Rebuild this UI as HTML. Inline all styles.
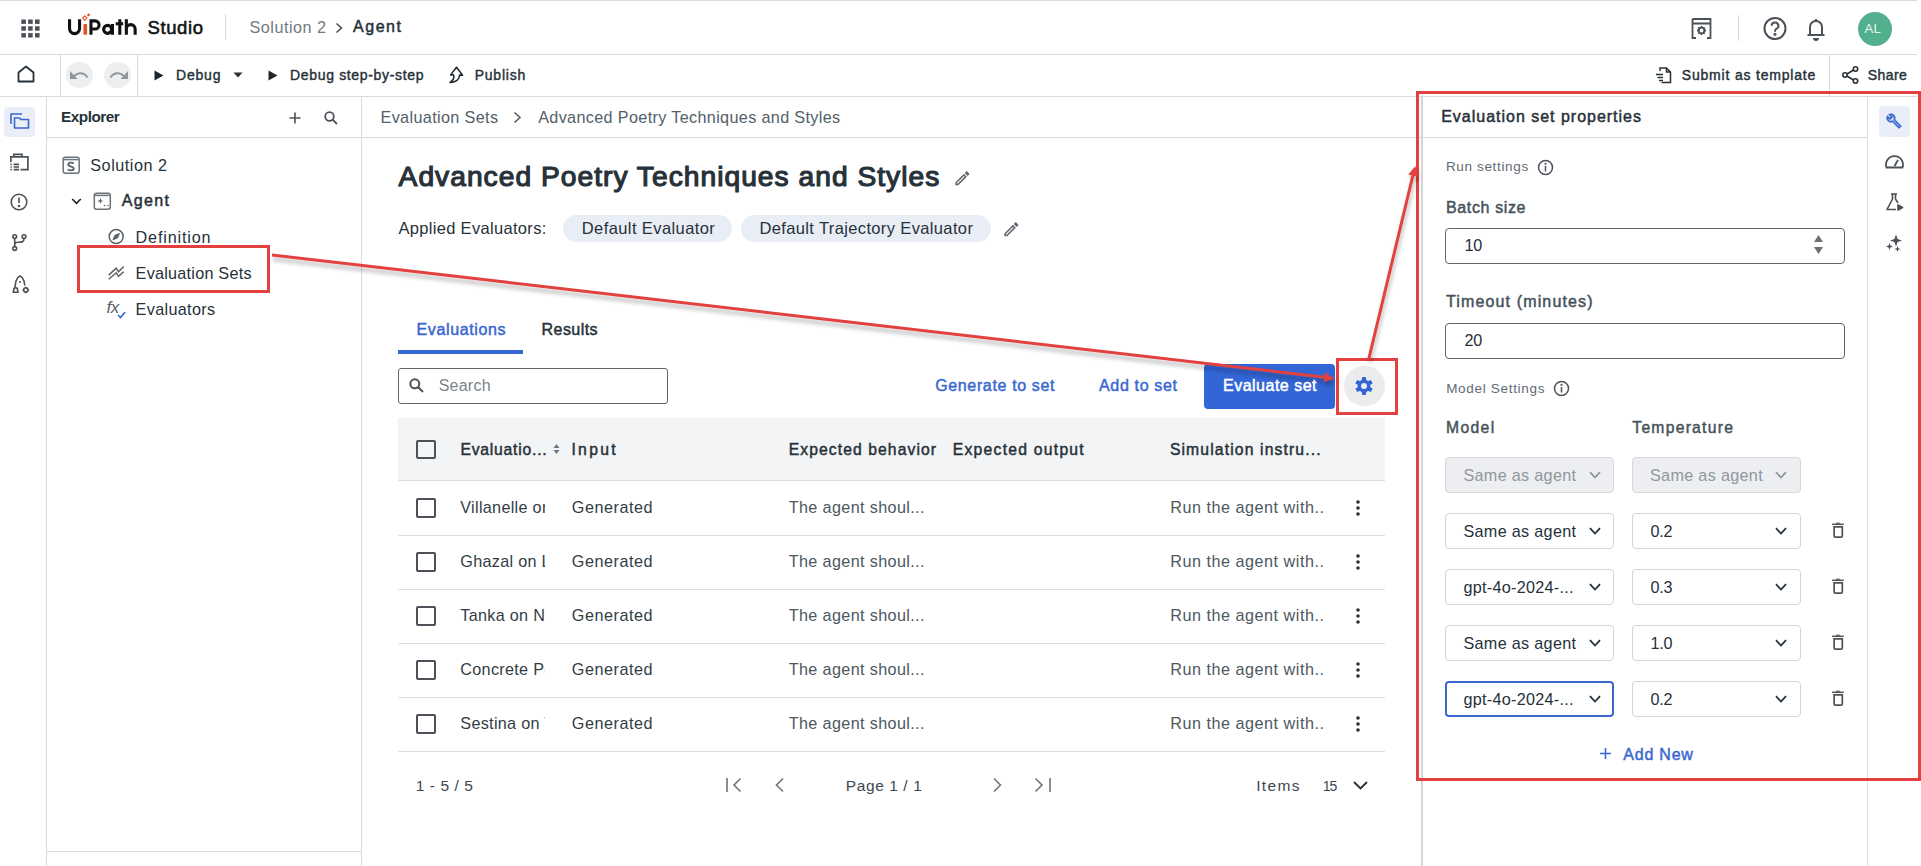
<!DOCTYPE html>
<html><head><meta charset="utf-8"><style>
html,body{margin:0;padding:0;background:#fff;}
body{width:1921px;height:866px;position:relative;overflow:hidden;font-family:"Liberation Sans",sans-serif;}
.t{position:absolute;white-space:nowrap;line-height:1;}
.a{position:absolute;}
svg{position:absolute;overflow:visible;}
</style></head><body>
<!-- structural lines -->
<div class="a" style="left:0;top:0;width:1917px;height:1px;background:#d9dcdf"></div>
<div class="a" style="left:0;top:54px;width:1917px;height:1px;background:#dadada"></div>
<div class="a" style="left:0;top:96px;width:1917px;height:1px;background:#dadada"></div>
<div class="a" style="left:60px;top:55px;width:1px;height:41px;background:#dadada"></div>
<div class="a" style="left:137px;top:55px;width:1px;height:41px;background:#dadada"></div>
<div class="a" style="left:1829px;top:55px;width:1px;height:41px;background:#dadada"></div>
<div class="a" style="left:225px;top:14px;width:1px;height:26px;background:#dadada"></div>
<div class="a" style="left:1738px;top:15px;width:1px;height:26px;background:#dadada"></div>
<div class="a" style="left:46px;top:97px;width:1px;height:769px;background:#dadada"></div>
<div class="a" style="left:361px;top:97px;width:1px;height:769px;background:#dadada"></div>
<div class="a" style="left:47px;top:137px;width:314px;height:1px;background:#dadada"></div>
<div class="a" style="left:362px;top:137px;width:1059px;height:1px;background:#dadada"></div>
<div class="a" style="left:47px;top:851px;width:314px;height:1px;background:#dadada"></div>
<div class="a" style="left:1421px;top:97px;width:2px;height:769px;background:#d6d6d6"></div>
<div class="a" style="left:1423px;top:137px;width:444px;height:1px;background:#dadada"></div>
<div class="a" style="left:1867px;top:97px;width:1px;height:769px;background:#e0e0e0"></div>

<!-- header -->
<svg style="left:21px;top:19px" width="19" height="19" viewBox="0 0 19 19" fill="#4b5157">
<rect x="0.3" y="0.5" width="4.6" height="4.4"/><rect x="7.1" y="0.5" width="4.6" height="4.4"/><rect x="14" y="0.5" width="4.6" height="4.4"/>
<rect x="0.3" y="7.3" width="4.6" height="4.4"/><rect x="7.1" y="7.3" width="4.6" height="4.4"/><rect x="14" y="7.3" width="4.6" height="4.4"/>
<rect x="0.3" y="14.1" width="4.6" height="4.4"/><rect x="7.1" y="14.1" width="4.6" height="4.4"/><rect x="14" y="14.1" width="4.6" height="4.4"/>
</svg>
<svg style="left:0;top:0" width="150" height="45" viewBox="0 0 150 45" fill="none" stroke="#111" stroke-width="3.1">
<path d="M69.55 19.3 V28.6 A5 5 0 0 0 79.55 28.6 V19.3"/>
<path d="M90.95 34.8 V20.85 H95 A4.1 4.1 0 0 1 95 29.05 H90.95"/>
<circle cx="107.6" cy="29.35" r="4"/><path d="M112.45 24 V34.8"/>
<path d="M119.8 19.3 V34.8 M115.7 23.7 H123.2"/>
<path d="M126.35 19.3 V34.8 M126.35 29 A4.4 4.4 0 0 1 135.15 29 V34.8"/>
<rect x="83.4" y="24" width="3.7" height="10.8" rx="1" fill="#e2542c" stroke="none"/>
<path d="M84.8 15.8 L87 18.1 L84.8 20.4 L82.6 18.1 Z" stroke="#e2542c" stroke-width="1.1"/>
<path d="M88.6 13.2 L90.3 14.9 L88.6 16.6 L86.9 14.9 Z" fill="#e2542c" stroke="none"/>
</svg>
<svg style="left:335px;top:22px" width="9" height="12" viewBox="0 0 9 12"><path d="M1.5 1.5 L6.5 6 L1.5 10.5" stroke="#4b5157" stroke-width="1.6" fill="none"/></svg>
<!-- right header icons -->
<svg style="left:1691px;top:18px" width="21" height="21" viewBox="0 0 21 21" fill="none" stroke="#4b5157" stroke-width="1.8">
<path d="M1 5.5 H20 M1.5 1 H19.5 V20 H16 M5 20 H1.5 V1"/><circle cx="10.5" cy="12.5" r="2.8"/><path d="M10.5 8 v1.5 M10.5 15.5 v1.5 M6 12.5 h1.5 M13.5 12.5 h1.5 M7.3 9.3 l1 1 M12.7 14.7 l1 1 M13.7 9.3 l-1 1 M8.3 14.7 l-1 1"/>
</svg>
<svg style="left:1763px;top:17px" width="24" height="24" viewBox="0 0 24 24" fill="none" stroke="#4b5157" stroke-width="2">
<circle cx="12" cy="11.5" r="10.5"/><path d="M8.6 8.8 a3.4 3.4 0 1 1 4.8 3.1 c-1 .5 -1.4 1.1 -1.4 2.2 v.6"/><circle cx="12" cy="17.3" r="0.6" fill="#4b5157"/>
</svg>
<svg style="left:1806px;top:17px" width="20" height="24" viewBox="0 0 20 24" fill="none" stroke="#4b5157" stroke-width="2">
<path d="M10 2 v1.5 M4 17 V10 a6 6 0 0 1 12 0 V17 M1.5 18 H18.5"/><path d="M8 21 a2 2 0 0 0 4 0" fill="#4b5157"/>
</svg>
<div class="a" style="left:1858px;top:11.5px;width:34px;height:34px;border-radius:50%;background:#52b08e"></div>
<div class="t" style="left:1864.5px;top:22px;font-size:13px;color:#eaf7f1;letter-spacing:0.3px">AL</div>

<!-- toolbar -->
<svg style="left:17px;top:65px" width="18" height="18" viewBox="0 0 18 18" fill="none" stroke="#273139" stroke-width="1.8" stroke-linejoin="round">
<path d="M1.5 7.5 L9 1.5 L16.5 7.5 V16.5 H1.5 Z"/>
</svg>
<div class="a" style="left:66.3px;top:61.9px;width:26.6px;height:26.6px;border-radius:50%;background:#eceef0"></div>
<div class="a" style="left:104.1px;top:61.9px;width:26.6px;height:26.6px;border-radius:50%;background:#eceef0"></div>
<svg style="left:69px;top:69px" width="22" height="14" viewBox="0 0 22 14"><path d="M4 9 C7 3 15 2.5 18.5 8.5" stroke="#8f979d" stroke-width="2" fill="none"/><path d="M1 2 L1 10 L8.5 10 Z" fill="#8f979d"/></svg>
<svg style="left:107px;top:69px" width="22" height="14" viewBox="0 0 22 14"><path d="M18 9 C15 3 7 2.5 3.5 8.5" stroke="#8f979d" stroke-width="2" fill="none"/><path d="M21 2 L21 10 L13.5 10 Z" fill="#8f979d"/></svg>
<svg style="left:154px;top:70px" width="10" height="11" viewBox="0 0 10 11"><path d="M0.5 0.5 L9.5 5.5 L0.5 10.5Z" fill="#1e262c"/></svg>
<svg style="left:233px;top:72px" width="10" height="6" viewBox="0 0 10 6"><path d="M0.5 0.5 H9.5 L5 5.5Z" fill="#273139"/></svg>
<svg style="left:268px;top:70px" width="10" height="11" viewBox="0 0 10 11"><path d="M0.5 0.5 L9.5 5.5 L0.5 10.5Z" fill="#1e262c"/></svg>
<svg style="left:449px;top:66px" width="15" height="18" viewBox="0 0 15 18" fill="none" stroke="#1e262c" stroke-width="1.5" stroke-linejoin="round"><path d="M7.5 1.2 L13.6 9.2 L10.6 9 C10.5 13 7 16 1 16.6 C4.5 14 5.5 11 4.5 8.8 L1.6 8.9 Z"/></svg>
<svg style="left:1655px;top:67px" width="17" height="17" viewBox="0 0 17 17" fill="none" stroke="#273139" stroke-width="1.5">
<path d="M5 4 V1 H11.5 L15.5 5 V15.5 H6.5 M11.5 1 V5 H15.5"/><path d="M1 7.5 H8 M2.5 10.5 H8 M4 13.5 H8"/>
</svg>
<svg style="left:1842px;top:66px" width="17" height="18" viewBox="0 0 17 18" fill="none" stroke="#273139" stroke-width="1.6">
<circle cx="13.5" cy="3" r="2.2"/><circle cx="3" cy="9" r="2.2"/><circle cx="13.5" cy="15" r="2.2"/><path d="M5 8 L11.5 4 M5 10 L11.5 14"/>
</svg>

<!-- left rail -->
<div class="a" style="left:3.5px;top:106.5px;width:31px;height:30px;border-radius:4px;background:#e9eef8"></div>
<svg style="left:10px;top:113px" width="20" height="16" viewBox="0 0 20 16" fill="none" stroke="#3a68cf" stroke-width="1.6" stroke-linejoin="round">
<path d="M1 11 V1 H12"/><path d="M4.5 5 H9.5 L11 6.5 H18.5 V15 H4.5 Z"/>
</svg>
<svg style="left:10px;top:153px" width="19" height="19" viewBox="0 0 19 19" fill="none" stroke="#4b5157" stroke-width="1.7">
<path d="M3.8 3.8 V1.4 H12 V3.8"/><path d="M0.9 9 V3.8 H17.9 V16.6 H10.5"/>
<path d="M0.5 11.4 H1.8 M3.6 11.4 H9 M0.5 14 H1.8 M3.6 14 H9 M0.5 16.6 H1.8 M3.6 16.6 H9"/>
</svg>
<svg style="left:10px;top:193px" width="18" height="18" viewBox="0 0 18 18" fill="none" stroke="#4b5157" stroke-width="1.6">
<circle cx="9" cy="9" r="7.8"/><path d="M9 4.5 V10"/><circle cx="9" cy="13" r="0.5" fill="#4b5157"/>
</svg>
<svg style="left:11px;top:234px" width="17" height="18" viewBox="0 0 17 18" fill="none" stroke="#4b5157" stroke-width="1.6">
<circle cx="3.7" cy="2.6" r="1.9"/><circle cx="13" cy="2.6" r="1.9"/><circle cx="3.7" cy="14.5" r="1.9"/><path d="M3.7 4.5 V12.6 M13 4.5 C13 8 11 8.3 7.5 8.3 C5 8.3 3.7 9 3.7 10.5"/>
</svg>
<svg style="left:12px;top:275px" width="18" height="19" viewBox="0 0 18 19" fill="none" stroke="#4b5157" stroke-width="1.6" stroke-linejoin="round">
<path d="M2.8 13 L3.5 8.5 C4 5 6 2 8 0.9 C10 2 12 5 12.5 8.5 L12.8 10.5"/><circle cx="8" cy="7" r="1" fill="#4b5157" stroke="none"/>
<path d="M1.2 17.2 L2.2 13 H5.2 L6 17.2 Z"/>
<circle cx="13.8" cy="15" r="2.1"/><path d="M13.8 11.7 V12.6 M13.8 17.4 V18.3 M10.5 15 H11.4 M16.2 15 H17.1"/>
</svg>

<!-- explorer -->
<svg style="left:289px;top:112px" width="12" height="12" viewBox="0 0 12 12"><path d="M6 0.5 V11.5 M0.5 6 H11.5" stroke="#4b5157" stroke-width="1.6"/></svg>
<svg style="left:324px;top:111px" width="14" height="14" viewBox="0 0 14 14" fill="none" stroke="#4b5157" stroke-width="1.8"><circle cx="5.5" cy="5.5" r="4.3"/><path d="M8.6 8.6 L13 13"/></svg>
<svg style="left:62px;top:156px" width="19" height="19" viewBox="0 0 19 19" fill="none" stroke="#6b7278" stroke-width="1.5">
<rect x="1.2" y="1.2" width="16" height="16" rx="2.2"/><path d="M2 3.6 H16.4"/>
<path d="M11.6 7.6 C10.8 6.2 6.3 6.1 6.3 8.6 C6.3 11 11.8 10.1 11.8 12.6 C11.8 15 7 14.8 6 13.3" stroke-width="1.9" stroke="#5b6369"/>
</svg>
<svg style="left:71px;top:198px" width="11" height="7" viewBox="0 0 11 7"><path d="M1.2 1 L5.5 5.3 L9.8 1" stroke="#1e262c" stroke-width="1.7" fill="none"/></svg>
<svg style="left:93px;top:192px" width="19" height="19" viewBox="0 0 19 19" fill="none" stroke="#6b7278" stroke-width="1.5">
<rect x="1.3" y="1.2" width="16" height="16" rx="2.2"/><path d="M2 3.4 H16.6"/>
<path d="M7.4 6 L8.2 8.2 L10.4 9 L8.2 9.8 L7.4 12 L6.6 9.8 L4.4 9 L6.6 8.2 Z" fill="#5b6369" stroke="none"/>
<circle cx="11.5" cy="13.5" r="0.8" fill="#5b6369" stroke="none"/><circle cx="15" cy="13.5" r="0.8" fill="#5b6369" stroke="none"/>
</svg>
<svg style="left:108px;top:229px" width="17" height="17" viewBox="0 0 17 17" fill="none" stroke="#5b6369" stroke-width="1.5">
<circle cx="8.2" cy="7.6" r="7"/><path d="M11.5 4.3 L9.6 9 L4.9 10.9 L6.8 6.2 Z" fill="#5b6369" stroke-width="0.8"/>
</svg>
<svg style="left:108px;top:265px" width="17" height="16" viewBox="0 0 17 16" fill="none" stroke="#5b6369" stroke-width="1.5" stroke-linejoin="miter">
<path d="M0.7 10.1 L8.2 3.2 L10.5 6.7 L15.7 1.5 M0.7 14.2 L8.2 7.8 L10.5 11.3 L15.7 6.7"/>
</svg>
<div class="t" style="left:106.5px;top:299px;font-size:17px;font-style:italic;color:#5b6369;letter-spacing:-0.5px">fx</div>
<svg style="left:117px;top:311px" width="9" height="8" viewBox="0 0 9 8"><path d="M1 4 L3.5 6.5 L8 1.2" stroke="#3a68cf" stroke-width="1.7" fill="none"/></svg>

<!-- main breadcrumb chevron -->
<svg style="left:513px;top:111px" width="9" height="13" viewBox="0 0 9 13"><path d="M1.5 1.5 L7 6.5 L1.5 11.5" stroke="#526069" stroke-width="1.6" fill="none"/></svg>
<!-- pencils -->
<svg style="left:953.3px;top:168.5px" width="18.7" height="18.7" viewBox="0 0 24 24"><path fill="#5f666c" d="M14.06 9.02l.92.92L5.92 19H5v-.92l9.06-9.06M17.66 3c-.25 0-.51.1-.7.29l-1.83 1.83 3.75 3.75 1.83-1.83c.39-.39.39-1.02 0-1.41l-2.34-2.34c-.2-.2-.45-.29-.71-.29zm-3.6 3.19L3 17.25V21h3.75L17.81 9.94l-3.75-3.75z"/></svg>
<svg style="left:1001.7px;top:219.9px" width="18.7" height="18.7" viewBox="0 0 24 24"><path fill="#5f666c" d="M14.06 9.02l.92.92L5.92 19H5v-.92l9.06-9.06M17.66 3c-.25 0-.51.1-.7.29l-1.83 1.83 3.75 3.75 1.83-1.83c.39-.39.39-1.02 0-1.41l-2.34-2.34c-.2-.2-.45-.29-.71-.29zm-3.6 3.19L3 17.25V21h3.75L17.81 9.94l-3.75-3.75z"/></svg>
<!-- chips -->
<div class="a" style="left:563px;top:215px;width:169px;height:27px;border-radius:14px;background:#e8edf6"></div>
<div class="a" style="left:741px;top:215px;width:250px;height:27px;border-radius:14px;background:#e8edf6"></div>
<!-- tabs -->
<div class="a" style="left:398px;top:350px;width:125px;height:4px;background:#3566d4"></div>
<!-- search -->
<div class="a" style="left:398px;top:368px;width:268px;height:33.5px;border:1px solid #646464;border-radius:3px"></div>
<svg style="left:409px;top:378px" width="15" height="15" viewBox="0 0 15 15" fill="none" stroke="#4b5157" stroke-width="2"><circle cx="5.8" cy="5.8" r="4.5"/><path d="M9 9 L14 14"/></svg>
<!-- button -->
<div class="a" style="left:1204px;top:364px;width:131px;height:44.5px;border-radius:4px;background:#3266d6"></div>
<div class="a" style="left:1344px;top:365.7px;width:40.6px;height:40.6px;border-radius:50%;background:#ebecee"></div>
<svg style="left:1353.3px;top:374.9px" width="22" height="22" viewBox="0 0 22 22">
<g fill="#3266d6"><circle cx="11" cy="11" r="6.4"/>
<rect x="8.9" y="2.1" width="4.2" height="4.5" rx="0.8"/><rect x="8.9" y="2.1" width="4.2" height="4.5" rx="0.8" transform="rotate(60 11 11)"/><rect x="8.9" y="2.1" width="4.2" height="4.5" rx="0.8" transform="rotate(120 11 11)"/>
<rect x="8.9" y="2.1" width="4.2" height="4.5" rx="0.8" transform="rotate(180 11 11)"/><rect x="8.9" y="2.1" width="4.2" height="4.5" rx="0.8" transform="rotate(240 11 11)"/><rect x="8.9" y="2.1" width="4.2" height="4.5" rx="0.8" transform="rotate(300 11 11)"/></g>
<circle cx="11" cy="11" r="3" fill="#ebecee"/>
</svg>

<!-- table -->
<div class="a" style="left:398px;top:418px;width:987px;height:62px;background:#f3f4f6"></div>
<div class="a" style="left:398px;top:480px;width:987px;height:1px;background:#dedede"></div>
<div class="a" style="left:398px;top:535px;width:987px;height:1px;background:#dedede"></div>
<div class="a" style="left:398px;top:589px;width:987px;height:1px;background:#dedede"></div>
<div class="a" style="left:398px;top:643px;width:987px;height:1px;background:#dedede"></div>
<div class="a" style="left:398px;top:697px;width:987px;height:1px;background:#dedede"></div>
<div class="a" style="left:398px;top:751px;width:987px;height:1px;background:#dedede"></div>
<div class="a" style="left:416px;top:439.5px;width:16px;height:15px;border:2px solid #4b5157;border-radius:2px"></div>
<div class="a" style="left:416px;top:498px;width:16px;height:16px;border:2px solid #4b5157;border-radius:2px"></div>
<div class="a" style="left:416px;top:552px;width:16px;height:16px;border:2px solid #4b5157;border-radius:2px"></div>
<div class="a" style="left:416px;top:606px;width:16px;height:16px;border:2px solid #4b5157;border-radius:2px"></div>
<div class="a" style="left:416px;top:660px;width:16px;height:16px;border:2px solid #4b5157;border-radius:2px"></div>
<div class="a" style="left:416px;top:714px;width:16px;height:16px;border:2px solid #4b5157;border-radius:2px"></div>
<svg style="left:553px;top:443px" width="7" height="12" viewBox="0 0 7 12"><path d="M0.5 5 L3.5 1 L6.5 5Z M0.5 7 L3.5 11 L6.5 7Z" fill="#6b757c"/></svg>
<svg style="left:1355px;top:500px" width="6" height="16" viewBox="0 0 6 16" fill="#273139"><circle cx="3" cy="2" r="1.8"/><circle cx="3" cy="8" r="1.8"/><circle cx="3" cy="14" r="1.8"/></svg>
<svg style="left:1355px;top:554px" width="6" height="16" viewBox="0 0 6 16" fill="#273139"><circle cx="3" cy="2" r="1.8"/><circle cx="3" cy="8" r="1.8"/><circle cx="3" cy="14" r="1.8"/></svg>
<svg style="left:1355px;top:608px" width="6" height="16" viewBox="0 0 6 16" fill="#273139"><circle cx="3" cy="2" r="1.8"/><circle cx="3" cy="8" r="1.8"/><circle cx="3" cy="14" r="1.8"/></svg>
<svg style="left:1355px;top:662px" width="6" height="16" viewBox="0 0 6 16" fill="#273139"><circle cx="3" cy="2" r="1.8"/><circle cx="3" cy="8" r="1.8"/><circle cx="3" cy="14" r="1.8"/></svg>
<svg style="left:1355px;top:716px" width="6" height="16" viewBox="0 0 6 16" fill="#273139"><circle cx="3" cy="2" r="1.8"/><circle cx="3" cy="8" r="1.8"/><circle cx="3" cy="14" r="1.8"/></svg>
<!-- pagination -->
<svg style="left:726px;top:777px" width="17" height="16" viewBox="0 0 17 16" fill="none" stroke="#6b757c" stroke-width="1.6"><path d="M1 1 V15 M14.5 1.5 L8 8 L14.5 14.5"/></svg>
<svg style="left:774px;top:777px" width="11" height="16" viewBox="0 0 11 16" fill="none" stroke="#6b757c" stroke-width="1.6"><path d="M9 1.5 L2.5 8 L9 14.5"/></svg>
<svg style="left:992px;top:777px" width="11" height="16" viewBox="0 0 11 16" fill="none" stroke="#6b757c" stroke-width="1.6"><path d="M2 1.5 L8.5 8 L2 14.5"/></svg>
<svg style="left:1033px;top:777px" width="18" height="16" viewBox="0 0 18 16" fill="none" stroke="#6b757c" stroke-width="1.6"><path d="M17 1 V15 M2.5 1.5 L9 8 L2.5 14.5"/></svg>
<svg style="left:1353px;top:781px" width="15" height="9" viewBox="0 0 15 9" fill="none" stroke="#273139" stroke-width="1.9"><path d="M1 1 L7.5 7.5 L14 1"/></svg>

<!-- right panel -->
<div class="a" style="left:1879px;top:106px;width:31px;height:31px;border-radius:4px;background:#e9eef8"></div>
<svg style="left:1886px;top:113px" width="16" height="16" viewBox="0 0 24 24"><path fill="#3a68cf" d="M22.61 18.99l-9.08-9.08c.93-2.34.45-5.1-1.44-7-2.3-2.3-5.9-2.51-8.45-.64l3.84 3.85-1.42 1.41-3.83-3.84C.36 6.24.57 9.85 2.87 12.14c1.86 1.86 4.57 2.35 6.89 1.48l9.11 9.11c.39.39 1.02.39 1.41 0l2.3-2.3c.4-.38.4-1.010.03-1.440zm-3 1.6l-9.46-9.46c-.61.45-1.29.72-2 .82-1.36.2-2.790-.21-3.830-1.250C3.37 9.76 2.93 8.5 3 7.26l3.09 3.09 4.24-4.24-3.09-3.09c1.24-.07 2.49.37 3.44 1.31 1.08 1.08 1.49 2.57 1.24 3.96-.12.71-.42 1.37-.88 1.96l9.45 9.45-.88.89z" stroke="#3a68cf" stroke-width="0.8"/></svg>
<svg style="left:1885px;top:154px" width="19" height="15" viewBox="0 0 19 15" fill="none" stroke="#4b5157" stroke-width="1.8">
<path d="M1.5 13.5 H17.5 A8.5 8.5 0 1 0 1.5 13.5 Z"/><path d="M9.5 12 L13 6"/>
</svg>
<svg style="left:1886px;top:193px" width="18" height="18" viewBox="0 0 18 18" fill="none" stroke="#4b5157" stroke-width="1.6" stroke-linejoin="round">
<path d="M5 1 H11 M6.5 1 V6 L1 16.5 H10 M9.5 1 V6 L12 10"/><path d="M12 12 L16.5 14.5 L12 17Z" fill="#4b5157"/>
</svg>
<svg style="left:1885px;top:234px" width="18" height="18" viewBox="0 0 18 18" fill="#4b5157">
<path d="M11 0.5 L12.6 4.9 L17 6.5 L12.6 8.1 L11 12.5 L9.4 8.1 L5 6.5 L9.4 4.9 Z"/><path d="M4.5 9 L5.4 11.6 L8 12.5 L5.4 13.4 L4.5 16 L3.6 13.4 L1 12.5 L3.6 11.6Z"/><path d="M12.5 12 L13.3 14.2 L15.5 15 L13.3 15.8 L12.5 18 L11.7 15.8 L9.5 15 L11.7 14.2Z"/>
</svg>
<svg style="left:1537px;top:159px" width="17" height="17" viewBox="0 0 17 17" fill="none" stroke="#4b5157" stroke-width="1.5"><circle cx="8.5" cy="8.5" r="7"/><path d="M8.5 7 V12.5"/><circle cx="8.5" cy="4.8" r="0.4" fill="#4b5157"/></svg>
<svg style="left:1553px;top:380px" width="17" height="17" viewBox="0 0 17 17" fill="none" stroke="#4b5157" stroke-width="1.5"><circle cx="8.5" cy="8.5" r="7"/><path d="M8.5 7 V12.5"/><circle cx="8.5" cy="4.8" r="0.4" fill="#4b5157"/></svg>
<div class="a" style="left:1445px;top:228px;width:398px;height:33.5px;border:1px solid #646464;border-radius:4px"></div>
<svg style="left:1813px;top:234px" width="11" height="21" viewBox="0 0 11 21" fill="#717171"><path d="M1 8 L5.5 1 L10 8Z M1 13 L5.5 20 L10 13Z"/></svg>
<div class="a" style="left:1445px;top:323px;width:398px;height:33.5px;border:1px solid #646464;border-radius:4px"></div>

<div class="a" style="left:1445px;top:457px;width:167px;height:34px;border:1px solid #d8d8d8;border-radius:4px;background:#eceef1"></div>
<div class="a" style="left:1632px;top:457px;width:167px;height:34px;border:1px solid #d8d8d8;border-radius:4px;background:#eceef1"></div>
<div class="a" style="left:1445px;top:513px;width:167px;height:34px;border:1px solid #d4d4d4;border-radius:4px"></div>
<div class="a" style="left:1632px;top:513px;width:167px;height:34px;border:1px solid #d4d4d4;border-radius:4px"></div>
<div class="a" style="left:1445px;top:569px;width:167px;height:34px;border:1px solid #d4d4d4;border-radius:4px"></div>
<div class="a" style="left:1632px;top:569px;width:167px;height:34px;border:1px solid #d4d4d4;border-radius:4px"></div>
<div class="a" style="left:1445px;top:625px;width:167px;height:34px;border:1px solid #d4d4d4;border-radius:4px"></div>
<div class="a" style="left:1632px;top:625px;width:167px;height:34px;border:1px solid #d4d4d4;border-radius:4px"></div>
<div class="a" style="left:1445px;top:681px;width:165px;height:32px;border:2px solid #3a68cf;border-radius:4px"></div>
<div class="a" style="left:1632px;top:681px;width:167px;height:34px;border:1px solid #d4d4d4;border-radius:4px"></div>
<svg style="left:1589px;top:471px" width="12" height="8" viewBox="0 0 12 8" fill="none" stroke="#8f979d" stroke-width="1.8"><path d="M1 1.2 L6 6.5 L11 1.2"/></svg>
<svg style="left:1775px;top:471px" width="12" height="8" viewBox="0 0 12 8" fill="none" stroke="#8f979d" stroke-width="1.8"><path d="M1 1.2 L6 6.5 L11 1.2"/></svg>
<svg style="left:1589px;top:527px" width="12" height="8" viewBox="0 0 12 8" fill="none" stroke="#273139" stroke-width="1.8"><path d="M1 1.2 L6 6.5 L11 1.2"/></svg>
<svg style="left:1775px;top:527px" width="12" height="8" viewBox="0 0 12 8" fill="none" stroke="#273139" stroke-width="1.8"><path d="M1 1.2 L6 6.5 L11 1.2"/></svg>
<svg style="left:1831px;top:522px" width="14" height="16" viewBox="0 0 14 16" fill="none" stroke="#4b5157" stroke-width="1.7"><path d="M1.1 2.3 H12.7" stroke-width="1.5"/><path d="M5.2 1.2 H8.6" stroke-width="1.2"/><path d="M3.1 4.9 V13.9 Q3.1 15.2 4.4 15.2 H10 Q11.3 15.2 11.3 13.9 V4.9 Z" stroke-width="1.7"/></svg>
<svg style="left:1589px;top:583px" width="12" height="8" viewBox="0 0 12 8" fill="none" stroke="#273139" stroke-width="1.8"><path d="M1 1.2 L6 6.5 L11 1.2"/></svg>
<svg style="left:1775px;top:583px" width="12" height="8" viewBox="0 0 12 8" fill="none" stroke="#273139" stroke-width="1.8"><path d="M1 1.2 L6 6.5 L11 1.2"/></svg>
<svg style="left:1831px;top:578px" width="14" height="16" viewBox="0 0 14 16" fill="none" stroke="#4b5157" stroke-width="1.7"><path d="M1.1 2.3 H12.7" stroke-width="1.5"/><path d="M5.2 1.2 H8.6" stroke-width="1.2"/><path d="M3.1 4.9 V13.9 Q3.1 15.2 4.4 15.2 H10 Q11.3 15.2 11.3 13.9 V4.9 Z" stroke-width="1.7"/></svg>
<svg style="left:1589px;top:639px" width="12" height="8" viewBox="0 0 12 8" fill="none" stroke="#273139" stroke-width="1.8"><path d="M1 1.2 L6 6.5 L11 1.2"/></svg>
<svg style="left:1775px;top:639px" width="12" height="8" viewBox="0 0 12 8" fill="none" stroke="#273139" stroke-width="1.8"><path d="M1 1.2 L6 6.5 L11 1.2"/></svg>
<svg style="left:1831px;top:634px" width="14" height="16" viewBox="0 0 14 16" fill="none" stroke="#4b5157" stroke-width="1.7"><path d="M1.1 2.3 H12.7" stroke-width="1.5"/><path d="M5.2 1.2 H8.6" stroke-width="1.2"/><path d="M3.1 4.9 V13.9 Q3.1 15.2 4.4 15.2 H10 Q11.3 15.2 11.3 13.9 V4.9 Z" stroke-width="1.7"/></svg>
<svg style="left:1589px;top:695px" width="12" height="8" viewBox="0 0 12 8" fill="none" stroke="#273139" stroke-width="1.8"><path d="M1 1.2 L6 6.5 L11 1.2"/></svg>
<svg style="left:1775px;top:695px" width="12" height="8" viewBox="0 0 12 8" fill="none" stroke="#273139" stroke-width="1.8"><path d="M1 1.2 L6 6.5 L11 1.2"/></svg>
<svg style="left:1831px;top:690px" width="14" height="16" viewBox="0 0 14 16" fill="none" stroke="#4b5157" stroke-width="1.7"><path d="M1.1 2.3 H12.7" stroke-width="1.5"/><path d="M5.2 1.2 H8.6" stroke-width="1.2"/><path d="M3.1 4.9 V13.9 Q3.1 15.2 4.4 15.2 H10 Q11.3 15.2 11.3 13.9 V4.9 Z" stroke-width="1.7"/></svg>
<svg style="left:1599px;top:747px" width="13" height="13" viewBox="0 0 13 13"><path d="M6.5 1 V12 M1 6.5 H12" stroke="#3a68cf" stroke-width="1.6"/></svg>
<div class="a" style="left:76.5px;top:245px;width:187.5px;height:42px;border:3px solid #e3403f"></div>
<div class="a" style="left:1336px;top:358px;width:56px;height:51px;border:3px solid #e3403f"></div>
<div class="a" style="left:1416px;top:91px;width:499px;height:684px;border:3px solid #e3403f"></div>
<svg style="left:0;top:0" width="1921" height="866" viewBox="0 0 1921 866">
<defs><filter id="sh" x="-10%" y="-50%" width="120%" height="200%"><feGaussianBlur in="SourceAlpha" stdDeviation="2.2"/><feOffset dx="1" dy="4"/><feComponentTransfer><feFuncA type="linear" slope="0.3"/></feComponentTransfer><feMerge><feMergeNode/><feMergeNode in="SourceGraphic"/></feMerge></filter></defs>
<g filter="url(#sh)">
<line x1="272" y1="255" x2="1325" y2="377.2" stroke="#e3403f" stroke-width="3"/>
<path d="M1334.5 378.4 L1323.9 382.2 L1324.9 372.3 Z" fill="#e3403f"/>
<line x1="1369" y1="358" x2="1413" y2="175" stroke="#e3403f" stroke-width="3"/>
<path d="M1415.4 165.9 L1417.9 176.7 L1408.2 174.4 Z" fill="#e3403f"/>
</g>
</svg>

<div class="t" id="t0" style="left:249.5px;top:19.09px;font-size:16.20px;font-weight:400;color:#6f7a83;letter-spacing:0.500px;"><span>Solution 2</span></div>
<div class="t" id="t1" style="left:353.0px;top:19.26px;font-size:16.00px;font-weight:400;color:#273139;letter-spacing:1.547px;-webkit-text-stroke:0.48px #273139;"><span>Agent</span></div>
<div class="t" id="t2" style="left:147.5px;top:19.34px;font-size:18.50px;font-weight:400;color:#111;letter-spacing:0.606px;-webkit-text-stroke:0.55px #111;"><span>Studio</span></div>
<div class="t" id="t3" style="left:176.0px;top:68.35px;font-size:14.00px;font-weight:400;color:#273139;letter-spacing:0.809px;-webkit-text-stroke:0.42px #273139;"><span>Debug</span></div>
<div class="t" id="t4" style="left:290.0px;top:68.35px;font-size:14.00px;font-weight:400;color:#273139;letter-spacing:0.665px;-webkit-text-stroke:0.42px #273139;"><span>Debug step-by-step</span></div>
<div class="t" id="t5" style="left:474.7px;top:68.35px;font-size:14.00px;font-weight:400;color:#273139;letter-spacing:0.780px;-webkit-text-stroke:0.42px #273139;"><span>Publish</span></div>
<div class="t" id="t6" style="left:1681.8px;top:68.35px;font-size:14.00px;font-weight:400;color:#273139;letter-spacing:0.803px;-webkit-text-stroke:0.42px #273139;"><span>Submit as template</span></div>
<div class="t" id="t7" style="left:1867.7px;top:68.35px;font-size:14.00px;font-weight:400;color:#273139;letter-spacing:0.435px;-webkit-text-stroke:0.42px #273139;"><span>Share</span></div>
<div class="t" id="t8" style="left:61.1px;top:109.05px;font-size:15.30px;font-weight:700;color:#273139;letter-spacing:-0.495px;"><span>Explorer</span></div>
<div class="t" id="t9" style="left:90.3px;top:157.49px;font-size:16.20px;font-weight:400;color:#273139;letter-spacing:0.522px;"><span>Solution 2</span></div>
<div class="t" id="t10" style="left:121.8px;top:193.36px;font-size:16.00px;font-weight:400;color:#273139;letter-spacing:1.347px;-webkit-text-stroke:0.48px #273139;"><span>Agent</span></div>
<div class="t" id="t11" style="left:135.6px;top:229.09px;font-size:16.20px;font-weight:400;color:#273139;letter-spacing:0.822px;"><span>Definition</span></div>
<div class="t" id="t12" style="left:135.6px;top:265.09px;font-size:16.20px;font-weight:400;color:#273139;letter-spacing:0.244px;"><span>Evaluation Sets</span></div>
<div class="t" id="t13" style="left:135.6px;top:301.09px;font-size:16.20px;font-weight:400;color:#273139;letter-spacing:0.335px;"><span>Evaluators</span></div>
<div class="t" id="t14" style="left:380.5px;top:108.69px;font-size:16.20px;font-weight:400;color:#526069;letter-spacing:0.358px;"><span>Evaluation Sets</span></div>
<div class="t" id="t15" style="left:538.2px;top:108.69px;font-size:16.20px;font-weight:400;color:#526069;letter-spacing:0.348px;"><span>Advanced Poetry Techniques and Styles</span></div>
<div class="t" id="t16" style="left:398.6px;top:162.33px;font-size:28.20px;font-weight:400;color:#273139;letter-spacing:1.018px;-webkit-text-stroke:1.18px #273139;"><span>Advanced Poetry Techniques and Styles</span></div>
<div class="t" id="t17" style="left:398.4px;top:219.93px;font-size:16.50px;font-weight:400;color:#273139;letter-spacing:0.318px;"><span>Applied Evaluators:</span></div>
<div class="t" id="t18" style="left:581.8px;top:219.93px;font-size:16.50px;font-weight:400;color:#273139;letter-spacing:0.401px;"><span>Default Evaluator</span></div>
<div class="t" id="t19" style="left:759.5px;top:219.93px;font-size:16.50px;font-weight:400;color:#273139;letter-spacing:0.363px;"><span>Default Trajectory Evaluator</span></div>
<div class="t" id="t20" style="left:416.5px;top:322.26px;font-size:16.00px;font-weight:400;color:#3a68cf;letter-spacing:0.628px;-webkit-text-stroke:0.48px #3a68cf;"><span>Evaluations</span></div>
<div class="t" id="t21" style="left:541.6px;top:322.26px;font-size:16.00px;font-weight:400;color:#273139;letter-spacing:0.440px;-webkit-text-stroke:0.48px #273139;"><span>Results</span></div>
<div class="t" id="t22" style="left:438.7px;top:378.06px;font-size:16.00px;font-weight:400;color:#7a848c;letter-spacing:0.239px;"><span>Search</span></div>
<div class="t" id="t23" style="left:935.2px;top:378.06px;font-size:16.00px;font-weight:400;color:#3a68cf;letter-spacing:0.643px;-webkit-text-stroke:0.48px #3a68cf;"><span>Generate to set</span></div>
<div class="t" id="t24" style="left:1099.0px;top:378.06px;font-size:16.00px;font-weight:400;color:#3a68cf;letter-spacing:0.661px;-webkit-text-stroke:0.48px #3a68cf;"><span>Add to set</span></div>
<div class="t" id="t25" style="left:1223.0px;top:378.06px;font-size:16.00px;font-weight:400;color:#ffffff;letter-spacing:0.494px;-webkit-text-stroke:0.48px #ffffff;"><span>Evaluate set</span></div>
<div class="t" id="t26" style="left:460.4px;top:441.91px;font-size:15.70px;font-weight:400;color:#273139;letter-spacing:0.789px;-webkit-text-stroke:0.47px #273139;"><span>Evaluatio...</span></div>
<div class="t" id="t27" style="left:571.4px;top:441.91px;font-size:15.70px;font-weight:400;color:#273139;letter-spacing:2.348px;-webkit-text-stroke:0.47px #273139;"><span>Input</span></div>
<div class="t" id="t28" style="left:788.8px;top:441.91px;font-size:15.70px;font-weight:400;color:#273139;letter-spacing:1.078px;-webkit-text-stroke:0.47px #273139;"><span>Expected behavior</span></div>
<div class="t" id="t29" style="left:952.8px;top:441.91px;font-size:15.70px;font-weight:400;color:#273139;letter-spacing:1.251px;-webkit-text-stroke:0.47px #273139;"><span>Expected output</span></div>
<div class="t" id="t30" style="left:1169.9px;top:441.91px;font-size:15.70px;font-weight:400;color:#273139;letter-spacing:1.140px;-webkit-text-stroke:0.47px #273139;"><span>Simulation instru...</span></div>
<div class="t" id="t31" style="left:460.3px;top:498.89px;font-size:16.20px;font-weight:400;color:#333d45;letter-spacing:0.300px;width:84.7px;overflow:hidden;"><span>Villanelle on</span></div>
<div class="t" id="t32" style="left:571.8px;top:498.89px;font-size:16.20px;font-weight:400;color:#333d45;letter-spacing:0.525px;"><span>Generated</span></div>
<div class="t" id="t33" style="left:788.7px;top:498.89px;font-size:16.20px;font-weight:400;color:#4d5861;letter-spacing:0.365px;"><span>The agent shoul...</span></div>
<div class="t" id="t34" style="left:1170.2px;top:498.89px;font-size:16.20px;font-weight:400;color:#4d5861;letter-spacing:0.517px;"><span>Run the agent with..</span></div>
<div class="t" id="t35" style="left:460.3px;top:552.89px;font-size:16.20px;font-weight:400;color:#333d45;letter-spacing:0.300px;width:84.7px;overflow:hidden;"><span>Ghazal on Lo</span></div>
<div class="t" id="t36" style="left:571.8px;top:552.89px;font-size:16.20px;font-weight:400;color:#333d45;letter-spacing:0.525px;"><span>Generated</span></div>
<div class="t" id="t37" style="left:788.7px;top:552.89px;font-size:16.20px;font-weight:400;color:#4d5861;letter-spacing:0.365px;"><span>The agent shoul...</span></div>
<div class="t" id="t38" style="left:1170.2px;top:552.89px;font-size:16.20px;font-weight:400;color:#4d5861;letter-spacing:0.517px;"><span>Run the agent with..</span></div>
<div class="t" id="t39" style="left:460.3px;top:606.89px;font-size:16.20px;font-weight:400;color:#333d45;letter-spacing:0.300px;width:84.7px;overflow:hidden;"><span>Tanka on Na</span></div>
<div class="t" id="t40" style="left:571.8px;top:606.89px;font-size:16.20px;font-weight:400;color:#333d45;letter-spacing:0.525px;"><span>Generated</span></div>
<div class="t" id="t41" style="left:788.7px;top:606.89px;font-size:16.20px;font-weight:400;color:#4d5861;letter-spacing:0.365px;"><span>The agent shoul...</span></div>
<div class="t" id="t42" style="left:1170.2px;top:606.89px;font-size:16.20px;font-weight:400;color:#4d5861;letter-spacing:0.517px;"><span>Run the agent with..</span></div>
<div class="t" id="t43" style="left:460.3px;top:660.89px;font-size:16.20px;font-weight:400;color:#333d45;letter-spacing:0.300px;width:84.7px;overflow:hidden;"><span>Concrete Po</span></div>
<div class="t" id="t44" style="left:571.8px;top:660.89px;font-size:16.20px;font-weight:400;color:#333d45;letter-spacing:0.525px;"><span>Generated</span></div>
<div class="t" id="t45" style="left:788.7px;top:660.89px;font-size:16.20px;font-weight:400;color:#4d5861;letter-spacing:0.365px;"><span>The agent shoul...</span></div>
<div class="t" id="t46" style="left:1170.2px;top:660.89px;font-size:16.20px;font-weight:400;color:#4d5861;letter-spacing:0.517px;"><span>Run the agent with..</span></div>
<div class="t" id="t47" style="left:460.3px;top:714.89px;font-size:16.20px;font-weight:400;color:#333d45;letter-spacing:0.300px;width:84.7px;overflow:hidden;"><span>Sestina on T</span></div>
<div class="t" id="t48" style="left:571.8px;top:714.89px;font-size:16.20px;font-weight:400;color:#333d45;letter-spacing:0.525px;"><span>Generated</span></div>
<div class="t" id="t49" style="left:788.7px;top:714.89px;font-size:16.20px;font-weight:400;color:#4d5861;letter-spacing:0.365px;"><span>The agent shoul...</span></div>
<div class="t" id="t50" style="left:1170.2px;top:714.89px;font-size:16.20px;font-weight:400;color:#4d5861;letter-spacing:0.517px;"><span>Run the agent with..</span></div>
<div class="t" id="t51" style="left:415.7px;top:777.88px;font-size:15.50px;font-weight:400;color:#3d474f;letter-spacing:0.592px;"><span>1 - 5 / 5</span></div>
<div class="t" id="t52" style="left:845.8px;top:777.88px;font-size:15.50px;font-weight:400;color:#3d474f;letter-spacing:0.592px;"><span>Page 1 / 1</span></div>
<div class="t" id="t53" style="left:1256.2px;top:777.88px;font-size:15.50px;font-weight:400;color:#3d474f;letter-spacing:1.348px;"><span>Items</span></div>
<div class="t" id="t54" style="left:1322.8px;top:779.15px;font-size:14.00px;font-weight:400;color:#3d474f;letter-spacing:-1.078px;"><span>15</span></div>
<div class="t" id="t55" style="left:1441.2px;top:109.36px;font-size:16.00px;font-weight:400;color:#273139;letter-spacing:0.987px;-webkit-text-stroke:0.48px #273139;"><span>Evaluation set properties</span></div>
<div class="t" id="t56" style="left:1445.9px;top:160.27px;font-size:13.50px;font-weight:400;color:#5f6b74;letter-spacing:0.659px;"><span>Run settings</span></div>
<div class="t" id="t57" style="left:1446.0px;top:200.16px;font-size:16.00px;font-weight:400;color:#46525b;letter-spacing:0.632px;-webkit-text-stroke:0.48px #46525b;"><span>Batch size</span></div>
<div class="t" id="t58" style="left:1464.5px;top:237.09px;font-size:16.20px;font-weight:400;color:#273139;letter-spacing:-0.216px;"><span>10</span></div>
<div class="t" id="t59" style="left:1446.0px;top:294.46px;font-size:16.00px;font-weight:400;color:#46525b;letter-spacing:1.136px;-webkit-text-stroke:0.48px #46525b;"><span>Timeout (minutes)</span></div>
<div class="t" id="t60" style="left:1464.5px;top:332.09px;font-size:16.20px;font-weight:400;color:#273139;letter-spacing:-0.216px;"><span>20</span></div>
<div class="t" id="t61" style="left:1446.2px;top:382.07px;font-size:13.50px;font-weight:400;color:#5f6b74;letter-spacing:0.684px;"><span>Model Settings</span></div>
<div class="t" id="t62" style="left:1446.0px;top:420.31px;font-size:15.70px;font-weight:400;color:#46525b;letter-spacing:1.366px;-webkit-text-stroke:0.47px #46525b;"><span>Model</span></div>
<div class="t" id="t63" style="left:1632.3px;top:420.31px;font-size:15.70px;font-weight:400;color:#46525b;letter-spacing:1.252px;-webkit-text-stroke:0.47px #46525b;"><span>Temperature</span></div>
<div class="t" id="t64" style="left:1463.4px;top:467.29px;font-size:16.20px;font-weight:400;color:#90979c;letter-spacing:0.317px;"><span>Same as agent</span></div>
<div class="t" id="t65" style="left:1650.0px;top:467.29px;font-size:16.20px;font-weight:400;color:#90979c;letter-spacing:0.317px;"><span>Same as agent</span></div>
<div class="t" id="t66" style="left:1463.4px;top:522.89px;font-size:16.20px;font-weight:400;color:#273139;letter-spacing:0.317px;"><span>Same as agent</span></div>
<div class="t" id="t67" style="left:1650.5px;top:522.89px;font-size:16.20px;font-weight:400;color:#273139;letter-spacing:-0.258px;"><span>0.2</span></div>
<div class="t" id="t68" style="left:1463.4px;top:578.69px;font-size:16.20px;font-weight:400;color:#273139;letter-spacing:0.279px;"><span>gpt-4o-2024-...</span></div>
<div class="t" id="t69" style="left:1650.5px;top:578.69px;font-size:16.20px;font-weight:400;color:#273139;letter-spacing:-0.258px;"><span>0.3</span></div>
<div class="t" id="t70" style="left:1463.4px;top:634.79px;font-size:16.20px;font-weight:400;color:#273139;letter-spacing:0.317px;"><span>Same as agent</span></div>
<div class="t" id="t71" style="left:1650.5px;top:634.79px;font-size:16.20px;font-weight:400;color:#273139;letter-spacing:-0.258px;"><span>1.0</span></div>
<div class="t" id="t72" style="left:1463.4px;top:690.99px;font-size:16.20px;font-weight:400;color:#273139;letter-spacing:0.279px;"><span>gpt-4o-2024-...</span></div>
<div class="t" id="t73" style="left:1650.5px;top:690.99px;font-size:16.20px;font-weight:400;color:#273139;letter-spacing:-0.258px;"><span>0.2</span></div>
<div class="t" id="t74" style="left:1623.3px;top:747.46px;font-size:16.00px;font-weight:400;color:#3a68cf;letter-spacing:0.780px;-webkit-text-stroke:0.48px #3a68cf;"><span>Add New</span></div>
</body></html>
